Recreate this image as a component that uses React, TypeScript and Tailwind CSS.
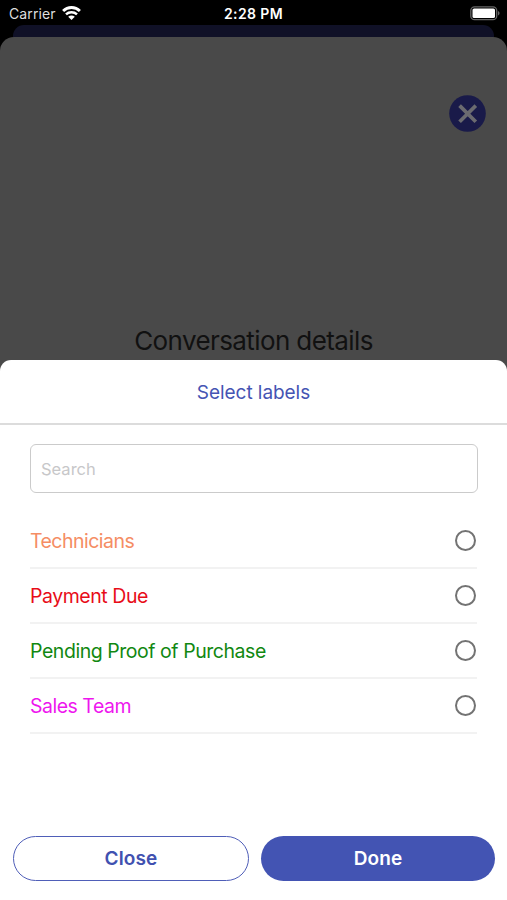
//Icons
const WifiIcon = () => (
  <svg width="19" height="15" viewBox="0 0 19 15" fill="none" stroke="#fff">
    <path d="M1.1 5C5.8 0.4 13.2 0.4 17.9 5" strokeWidth="2.9" />
    <path d="M4 8.3C7 5.5 12 5.5 15 8.3" strokeWidth="2.5" />
    <path d="M6.2 10.7C8 9 11 9 12.8 10.7L9.5 14Z" fill="#fff" stroke="none" />
  </svg>
);

const BatteryIcon = () => (
  <svg width="30" height="15" viewBox="0 0 30 15" fill="none">
    <rect x="0.8" y="0.8" width="25.9" height="12.9" rx="3.8" stroke="#666" strokeWidth="1.3" />
    <rect x="2.5" y="2.5" width="22.5" height="9.5" rx="1.6" fill="#fff" />
    <path d="M28 5C30 5.8 30 8.7 28 9.5Z" fill="#666" />
  </svg>
);

const CloseIcon = () => (
  <svg width="37" height="37" viewBox="0 0 37 37" fill="none">
    <circle cx="18.5" cy="18.5" r="18.3" fill="#191a49" />
    <path d="M11.9 11.9L25.5 25.5M25.5 11.9L11.9 25.5" stroke="#6b6b70" strokeWidth="3.7" strokeLinecap="square" />
  </svg>
);

//Interface
interface LabelItemProps {
  title: string;
  color: string;
}

const labels: LabelItemProps[] = [
  { title: "Technicians", color: "text-[#f58d64] tracking-[-0.53px]" },
  { title: "Payment Due", color: "text-[#e80c18] tracking-[-0.45px]" },
  { title: "Pending Proof of Purchase", color: "text-[#118811] tracking-[-0.45px]" },
  { title: "Sales Team", color: "text-[#ee16ee] tracking-[-0.5px]" },
];

const LabelItem = ({ title, color }: LabelItemProps) => {
  return (
    <li className="flex h-[55px] items-center justify-between border-b-2 border-[#f2f2f2] pr-px">
      <span className={`pt-[2px] text-[19.5px] ${color}`}>{title}</span>
      <span className="size-[21px] rounded-full border-2 border-[#737373]" />
    </li>
  );
};

const App = () => {
  return (
    <div className="flex h-[900px] w-[507px] flex-col overflow-hidden bg-black font-['Inter',sans-serif]">
      <header className="grid h-[25px] shrink-0 grid-cols-3 items-center pt-[2px] pr-[7px] pl-[9px] text-white">
        <div className="flex items-center gap-[6px]">
          <span className="text-[14px] tracking-[0.1px] text-[#dedede]">Carrier</span>
          <WifiIcon />
        </div>
        <span className="-mt-px pr-[2px] text-center text-[14px] font-semibold tracking-[0.4px]">2:28 PM</span>
        <div className="flex justify-end">
          <BatteryIcon />
        </div>
      </header>

      <div className="mx-[13px] h-[12px] shrink-0 rounded-t-[11px] bg-[#101127]" />
      <section className="flex h-[333px] shrink-0 flex-col rounded-t-[14px] bg-[#494949] pt-[58px]">
        <button className="mr-[21px] self-end">
          <CloseIcon />
        </button>
        <h1 className="mt-[192px] text-center text-[26px] leading-[34px] tracking-[-0.6px] text-[#111]">
          Conversation details
        </h1>
      </section>

      <main className="z-10 -mt-[10px] flex flex-1 flex-col rounded-t-[11px] bg-white">
        <h2 className="flex h-[65px] items-center justify-center border-b-2 border-[#dcdcdc] pt-[3px] text-[19px] tracking-[-0.05px] text-[#4554b3]">
          Select labels
        </h2>
        <div className="px-[30px] pt-[19px]">
          <input
            placeholder="Search"
            className="block h-[49px] w-[448px] rounded-[6px] border border-[#cbcbcb] px-[10px] text-[16.5px] placeholder:text-[#c7c7c9]"
          />
          <ul className="mt-[21px]">
            {labels.map((label) => (
              <LabelItem key={label.title} {...label} />
            ))}
          </ul>
        </div>
        <footer className="mt-auto mb-[19px] flex gap-[12px] pr-[12px] pl-[13px] text-[19px] font-semibold">
          <button className="h-[45px] w-[236px] rounded-full border border-[#4f5eb8] pt-[2px] tracking-[0.15px] text-[#4151b0]">
            Close
          </button>
          <button className="h-[45px] flex-1 rounded-full bg-[#4354b3] pt-[2px] tracking-[0.15px] text-white">
            Done
          </button>
        </footer>
      </main>
    </div>
  );
};

export default App;
